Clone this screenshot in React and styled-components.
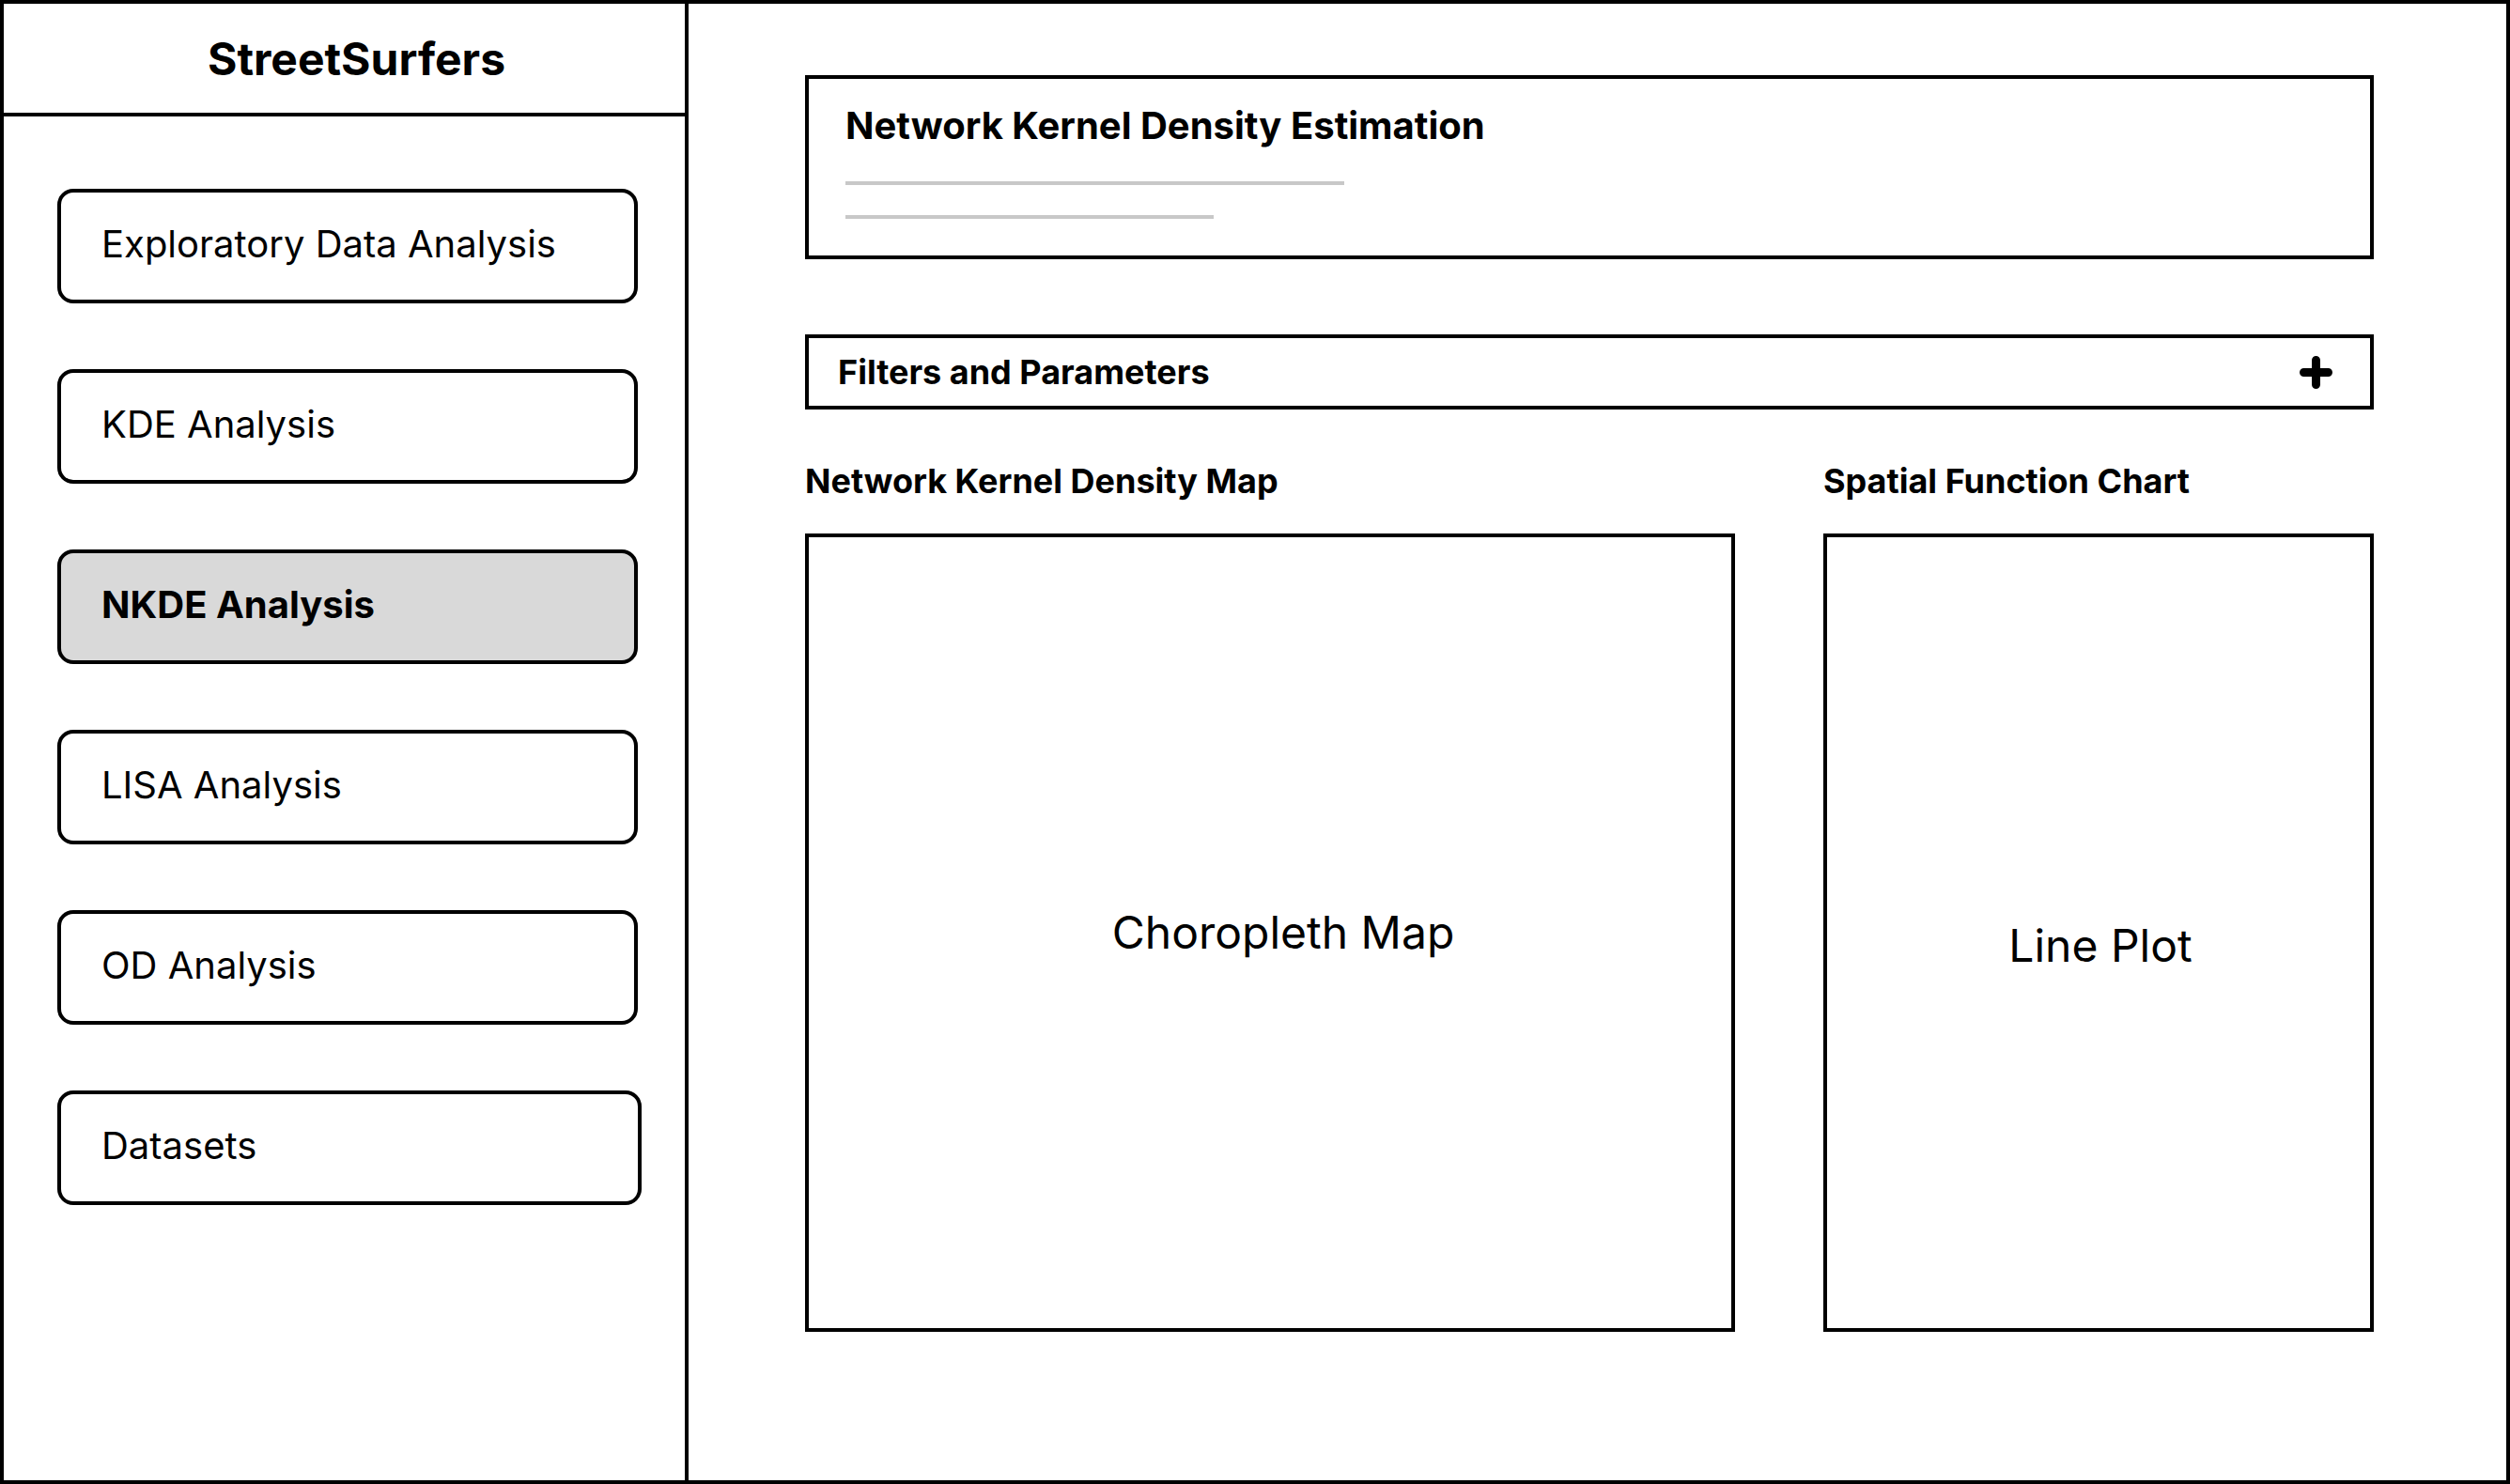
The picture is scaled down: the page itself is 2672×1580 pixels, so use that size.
import React from "react";
import styled, { createGlobalStyle } from "styled-components";

const GlobalStyle = createGlobalStyle`
    body {
        margin: 0;
        font-family: Inter, "Noto Sans", sans-serif;
        color: #000;
        background: #fff;
    }
`;

const Frame = styled.div`
    width: 2672px;
    height: 1580px;
    box-sizing: border-box;
    border: 4px solid #000;
    display: flex;
`;

const Sidebar = styled.aside`
    width: 729px;
    flex-shrink: 0;
    box-sizing: border-box;
    border-right: 4px solid #000;
    display: flex;
    flex-direction: column;
`;

const SidebarHeader = styled.div`
    height: 120px;
    box-sizing: border-box;
    border-bottom: 4px solid #000;
    display: flex;
    align-items: center;
    justify-content: center;
    padding: 2px 0 0 26px;
`;

const Brand = styled.h1`
    margin: 0;
    font-size: 48px;
    font-weight: 700;
    line-height: 1.2;
`;

const NavList = styled.nav`
    display: flex;
    flex-direction: column;
    gap: 70px;
    padding: 77px 0 0 57px;
`;

const NavButton = styled.div`
    width: ${(p) => (p.$wide ? "622px" : "618px")};
    height: 122px;
    box-sizing: border-box;
    border: 4px solid #000;
    border-radius: 17px;
    padding: 0 0 6px 43px;
    display: flex;
    align-items: center;
    font-size: 40px;
    font-weight: ${(p) => (p.$active ? 700 : 400)};
    background: ${(p) => (p.$active ? "#d9d9d9" : "#fff")};
    cursor: pointer;
`;

const Main = styled.main`
    flex: 1;
    display: flex;
    flex-direction: column;
    padding: 76px 141px 0 124px;
`;

const TitleCard = styled.section`
    border: 4px solid #000;
    padding: 26px 39px 39px;
    display: flex;
    flex-direction: column;
`;

const Title = styled.h2`
    margin: 0;
    font-size: 40px;
    font-weight: 700;
    line-height: 48px;
`;

const Placeholder = styled.div`
    height: 4px;
    width: ${(p) => p.$width}px;
    background: #c8c8c8;
    margin-top: ${(p) => p.$gap}px;
`;

const FilterBar = styled.div`
    margin-top: 80px;
    height: 80px;
    box-sizing: border-box;
    border: 4px solid #000;
    padding: 0 40px 0 31px;
    display: flex;
    align-items: center;
    justify-content: space-between;
    font-size: 36px;
    font-weight: 700;
`;

const Panels = styled.div`
    margin-top: 56px;
    display: grid;
    grid-template-columns: 990px 586px;
    gap: 94px;
`;

const Panel = styled.div`
    display: flex;
    flex-direction: column;
`;

const PanelLabel = styled.h3`
    margin: 0 0 36px;
    font-size: 36px;
    font-weight: 700;
    line-height: 40px;
`;

const PanelBox = styled.div`
    height: 850px;
    box-sizing: border-box;
    border: 4px solid #000;
    display: flex;
    align-items: center;
    justify-content: center;
    padding: ${(p) => p.$nudge || "0"};
    font-size: 48px;
    line-height: 58px;
`;

const PlusIcon = () => (
    <svg width="35" height="35" viewBox="0 0 35 35">
        <path d="M17.5 4.5v26M4.5 17.5h26" stroke="#000" strokeWidth="9" strokeLinecap="round" />
    </svg>
);

const navItems = [
    "Exploratory Data Analysis",
    "KDE Analysis",
    "NKDE Analysis",
    "LISA Analysis",
    "OD Analysis",
    "Datasets",
];

const App = () => {
    return (
        <Frame>
            <GlobalStyle />
            <Sidebar>
                <SidebarHeader>
                    <Brand>StreetSurfers</Brand>
                </SidebarHeader>
                <NavList>
                    {navItems.map((item) => (
                        <NavButton
                            key={item}
                            $active={item === "NKDE Analysis"}
                            $wide={item === "Datasets"}
                        >
                            {item}
                        </NavButton>
                    ))}
                </NavList>
            </Sidebar>
            <Main>
                <TitleCard>
                    <Title>Network Kernel Density Estimation</Title>
                    <Placeholder $width={531} $gap={35} />
                    <Placeholder $width={392} $gap={32} />
                </TitleCard>
                <FilterBar>
                    Filters and Parameters
                    <PlusIcon />
                </FilterBar>
                <Panels>
                    <Panel>
                        <PanelLabel>Network Kernel Density Map</PanelLabel>
                        <PanelBox $nudge="0 0 0 28px">Choropleth Map</PanelBox>
                    </Panel>
                    <Panel>
                        <PanelLabel>Spatial Function Chart</PanelLabel>
                        <PanelBox $nudge="27px 0 0 4px">Line Plot</PanelBox>
                    </Panel>
                </Panels>
            </Main>
        </Frame>
    );
};

export default App;
